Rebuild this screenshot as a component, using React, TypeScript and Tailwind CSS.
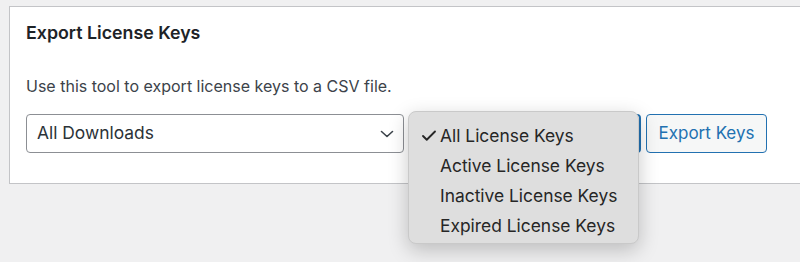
import { Check } from "lucide-react";

const statuses = [
  "All License Keys",
  "Active License Keys",
  "Inactive License Keys",
  "Expired License Keys",
];

const Chevron = () => (
  <svg width="14" height="8" viewBox="0 0 14 8" fill="none" className="shrink-0">
    <path d="M1.5 1.5 L7 6.5 L12.5 1.5" stroke="#3c434a" strokeWidth="1.6" strokeLinecap="round" strokeLinejoin="round" />
  </svg>
);

export default function App() {
  return (
    <div
      className="h-[262px] w-[800px] overflow-hidden bg-[#f0f0f1] pl-[9px] pt-[6px]"
      style={{ fontFamily: "Inter, 'Noto Sans', sans-serif" }}
    >
      <div className="h-[178px] border border-r-0 border-[#c3c4c7] bg-white pl-[16px] pt-[14px]">
        <h2 className="text-[17.8px] font-semibold leading-[24px] text-[#1d2327]">Export License Keys</h2>
        <p className="mt-[30px] text-[16px] leading-[22px] text-[#3c434a]">
          Use this tool to export license keys to a CSV file.
        </p>

        <div className="mt-[17px] flex items-start">
          <div className="flex h-[39px] w-[378px] items-center justify-between rounded-[4px] border border-[#8c8f94] bg-white pl-[10px] pr-[9px]">
            <span className="text-[17.4px] text-[#2c3338]">All Downloads</span>
            <Chevron />
          </div>

          <div className="relative ml-[6px] h-[39px] w-[231px] rounded-[4px] border-2 border-[#2271b1] bg-white">
            <div className="absolute left-[-4px] top-[-5px] z-10 flex h-[133px] w-[231px] flex-col rounded-[8px] border border-[#c9c9c9] bg-[#dedede] pt-[9px] shadow-[0_6px_20px_rgba(0,0,0,0.22)]">
              {statuses.map((s, i) => (
                <div key={s} className="flex h-[30px] items-center text-[17.4px] text-[#262626]">
                  <span className="flex w-[31px] justify-end pr-[2px]">
                    {i === 0 && <Check size={18} strokeWidth={2.5} className="text-[#262626]" />}
                  </span>
                  {s}
                </div>
              ))}
            </div>
          </div>

          <button className="ml-[5px] h-[39px] w-[121px] rounded-[4px] border border-[#2271b1] bg-[#f6f7f7] text-[17px] text-[#2271b1]">
            Export Keys
          </button>
        </div>
      </div>
    </div>
  );
}
